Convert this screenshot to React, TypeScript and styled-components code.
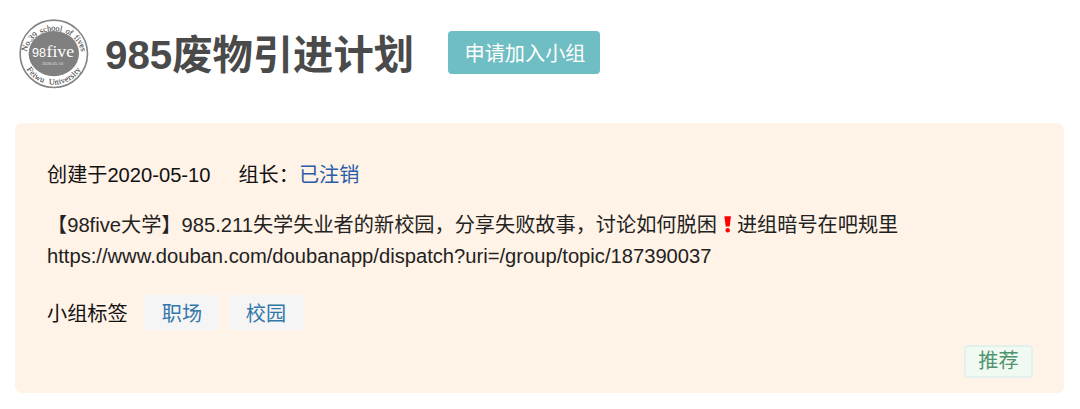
import React from 'react';
import styled, { createGlobalStyle } from 'styled-components';

const GlobalStyle = createGlobalStyle`
  body {
    margin: 0;
    background: #fff;
    font-family: 'Liberation Sans', 'Noto Sans CJK SC', sans-serif;
  }
`;

// Styled Components
const Page = styled.main`
  box-sizing: border-box;
  width: 1080px;
  height: 409px;
  padding: 19px 16px 0 15px;
`;

const Header = styled.header`
  display: flex;
  align-items: center;
  height: 70px;
  padding-left: 4px;
`;

const Logo = styled.svg`
  flex: none;
  width: 70px;
  height: 70px;
`;

const Title = styled.h1`
  margin: 4px 0 0 16px;
  width: 310px;
  font-size: 40.3px;
  line-height: 60px;
  font-weight: 700;
  color: #4a4a4a;
  white-space: nowrap;
`;

const JoinButton = styled.button`
  width: 152px;
  height: 43px;
  margin: 0 0 3px 33px;
  padding: 3px 0 0 2px;
  border: none;
  border-radius: 4px;
  background: #6fbec3;
  color: #fff;
  font: inherit;
  font-size: 20.15px;
  line-height: 40px;
  cursor: pointer;
`;

const Panel = styled.section`
  box-sizing: border-box;
  display: flex;
  flex-direction: column;
  height: 270px;
  margin-top: 34px;
  padding: 37px 31px 15px 32px;
  border-radius: 7px;
  background: #fff2e6;
  color: #111;
  font-size: 20.15px;
  line-height: 31px;
  white-space: nowrap;
`;

const Meta = styled.div`
  display: flex;
`;

const Owner = styled.span`
  margin-left: 28px;
`;

const OwnerLink = styled.a`
  color: #2a5caa;
  cursor: pointer;
`;

const IntroBlock = styled.div`
  margin-top: 19px;
`;

const Intro = styled.p`
  margin: 0;
  color: #222;
  font-size: 20.18px;
`;

const Mark = styled.svg`
  width: 20px;
  height: 20px;
  vertical-align: -3px;
`;

const Tags = styled.div`
  display: flex;
  align-items: center;
  gap: 10px;
  height: 35px;
  margin-top: 23px;
`;

const TagsLabel = styled.span`
  width: 88px;
  padding-top: 4px;
`;

const Tag = styled.a`
  width: 74px;
  height: 35px;
  line-height: 39px;
  background: #f5f5f5;
  color: #3377aa;
  text-align: center;
  cursor: pointer;
`;

const Recommend = styled.a`
  box-sizing: border-box;
  align-self: flex-end;
  width: 69px;
  height: 33px;
  margin-top: auto;
  border: 2px solid #e3f1ec;
  border-radius: 4px;
  background: #f0f9f2;
  color: #4f946e;
  line-height: 28px;
  text-align: center;
  cursor: pointer;
`;

const tags = ['职场', '校园'];

const GroupLogo = () => (
  <Logo viewBox="0 0 70 70" fontFamily="'Liberation Serif', serif">
    <defs>
      <path id="ring-top" d="M 7.4 37 A 27.4 25 0 0 1 62.6 37" />
      <path id="ring-bottom" d="M 3.5 35 A 31.3 30.6 0 0 0 66.1 35" />
    </defs>
    <circle cx="34.8" cy="34.8" r="33.7" fill="#fff" stroke="#858585" strokeWidth="1.6" />
    <ellipse cx="34.8" cy="34.6" rx="25.2" ry="22.6" fill="#808080" />
    <g fill="#444" fontSize="8.2" stroke="#444" strokeWidth="0.1">
      <text textAnchor="middle" wordSpacing="1.2">
        <textPath href="#ring-top" startOffset="50%">No.39 school of fives</textPath>
      </text>
      <text textAnchor="middle" letterSpacing="0.3" wordSpacing="3">
        <textPath href="#ring-bottom" startOffset="50%">Feiwu University</textPath>
      </text>
    </g>
    <g fill="#fff">
      <text x="13" y="37.5" fontSize="12.5" textLength="14" lengthAdjust="spacingAndGlyphs" fontFamily="'Liberation Sans', sans-serif">98</text>
      <text x="27.5" y="37.5" fontSize="17.5" textLength="27.5" lengthAdjust="spacingAndGlyphs">five</text>
      <text x="23" y="45.5" fontSize="4.6" textLength="21" opacity="0.75">2020.05.10</text>
    </g>
  </Logo>
);

const App: React.FC = () => {
  return (
    <>
      <GlobalStyle />
      <Page>
        <Header>
          <GroupLogo />
          <Title>985废物引进计划</Title>
          <JoinButton>申请加入小组</JoinButton>
        </Header>
        <Panel>
          <Meta>
            <span>创建于2020-05-10</span>
            <Owner>
              组长：<OwnerLink>已注销</OwnerLink>
            </Owner>
          </Meta>
          <IntroBlock>
            <Intro>
              【98five大学】985.211失学失业者的新校园，分享失败故事，讨论如何脱困
              <Mark viewBox="0 0 20 20" role="img" aria-label="❗">
                <path d="M7.4 1.2h6.6l-1.3 10.4H8.7z" fill="#ff0000" />
                <circle cx="10.7" cy="15.2" r="2.2" fill="#ff0000" />
              </Mark>
              进组暗号在吧规里
            </Intro>
            <Intro>https://www.douban.com/doubanapp/dispatch?uri=/group/topic/187390037</Intro>
          </IntroBlock>
          <Tags>
            <TagsLabel>小组标签</TagsLabel>
            {tags.map((tag) => (
              <Tag key={tag}>{tag}</Tag>
            ))}
          </Tags>
          <Recommend>推荐</Recommend>
        </Panel>
      </Page>
    </>
  );
};

export default App;
